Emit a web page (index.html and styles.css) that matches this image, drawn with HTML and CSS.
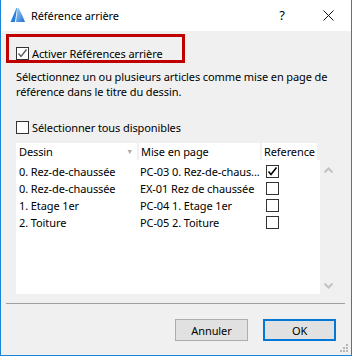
FILE: index.html
```html
<!DOCTYPE html>
<html lang="fr">
  <head>
    <meta charset="UTF-8" />
    <meta name="viewport" content="width=device-width, initial-scale=1.0" />
    <title>Référence arrière</title>
    <link rel="stylesheet" href="styles.css">
  </head>
  <body>
    <div class="window">
      <div class="titlebar">
        <svg class="app-icon" width="16" height="16" viewBox="0 0 16 16">
          <defs>
            <linearGradient id="fin" x1="0" y1="0" x2="1" y2="1">
              <stop offset="0" stop-color="#9fd0f7" />
              <stop offset="1" stop-color="#1c6fd6" />
            </linearGradient>
          </defs>
          <path d="M0.5 15 L6.5 1 L7 1 L5 15 Z" fill="#2a7fe0" />
          <path d="M6 15 L7.5 1 L8.5 1 Q12 7 15 15 Z" fill="url(#fin)" />
        </svg>
        <span class="title">Référence arrière</span>
        <span class="help">?</span>
        <span class="close">
          <svg width="11" height="11" viewBox="0 0 11 11">
            <path d="M0.5 0.5 L10.5 10.5 M10.5 0.5 L0.5 10.5" stroke="#111" stroke-width="1" />
          </svg>
        </span>
      </div>

      <div class="content">
        <div class="highlight">
          <label class="check-row">
            <span class="box">
              <svg width="11" height="11" viewBox="0 0 11 11"><path d="M1.5 5.5 L4 8.5 L9.5 1.5" fill="none" stroke="#555" stroke-width="1.3" /></svg>
            </span>
            Activer Références arrière
          </label>
        </div>

        <p class="hint">Sélectionnez un ou plusieurs articles comme mise en page de<br>référence dans le titre du dessin.</p>

        <label class="check-row select-all">
          <span class="box"></span>
          Sélectionner tous disponibles
        </label>

        <div class="list">
          <div class="list-head">
            <div class="head-cell">Dessin <span class="sort">&#9660;</span></div>
            <div class="head-cell">Mise en page</div>
            <div class="head-cell">Reference</div>
          </div>
          <div class="list-body">
            <div class="rows">
              <div class="row">
                <span>0. Rez-de-chaussée</span>
                <span>PC-03 0. Rez-de-chaus...</span>
                <span class="box">
                  <svg width="11" height="11" viewBox="0 0 11 11"><path d="M1.5 5.5 L4 8.5 L9.5 1.5" fill="none" stroke="#000" stroke-width="1.6" /></svg>
                </span>
              </div>
              <div class="row">
                <span>0. Rez-de-chaussée</span>
                <span>EX-01 Rez de chaussée</span>
                <span class="box"></span>
              </div>
              <div class="row">
                <span>1. Etage 1er</span>
                <span>PC-04 1. Etage 1er</span>
                <span class="box"></span>
              </div>
              <div class="row">
                <span>2. Toiture</span>
                <span>PC-05 2. Toiture</span>
                <span class="box"></span>
              </div>
            </div>
            <div class="scrollbar">
              <svg width="9" height="6" viewBox="0 0 9 6"><path d="M0.5 5.5 L4.5 1.5 L8.5 5.5" fill="none" stroke="#c2c2c2" stroke-width="2" /></svg>
              <svg width="9" height="6" viewBox="0 0 9 6"><path d="M0.5 0.5 L4.5 4.5 L8.5 0.5" fill="none" stroke="#c2c2c2" stroke-width="2" /></svg>
            </div>
          </div>
        </div>

        <div class="separator"></div>

        <div class="actions">
          <button class="btn">Annuler</button>
          <button class="btn ok">OK</button>
        </div>

        <svg class="grip" width="9" height="9" viewBox="0 0 9 9">
          <rect x="7" y="1" width="2" height="2" fill="#b5b5b5" />
          <rect x="4" y="4" width="2" height="2" fill="#b5b5b5" />
          <rect x="7" y="4" width="2" height="2" fill="#b5b5b5" />
          <rect x="1" y="7" width="2" height="2" fill="#b5b5b5" />
          <rect x="4" y="7" width="2" height="2" fill="#b5b5b5" />
          <rect x="7" y="7" width="2" height="2" fill="#b5b5b5" />
        </svg>
      </div>
    </div>
  </body>
</html>
```

FILE: styles.css
```css
body {
  margin: 0;
  font-family: "Segoe UI", "Noto Sans", sans-serif;
  font-size: 11px;
  letter-spacing: -0.1px;
  color: #000;
}
.window {
  width: 352px;
  height: 356px;
  box-sizing: border-box;
  border: 1px solid #1883d7;
  border-top: none;
  background: #f0f0f0;
  position: relative;
}
.titlebar {
  height: 31px;
  background: #fff;
  display: flex;
  align-items: center;
  padding-left: 9px;
}
.app-icon {
  margin-top: -1px;
}
.title {
  margin-left: 5px;
  flex: 1;
}
.help {
  font-size: 13px;
  width: 46px;
  text-align: center;
  margin-top: -2px;
}
.close {
  width: 46px;
  display: flex;
  justify-content: center;
  margin-top: -1px;
}
.content {
  padding-top: 3px;
}
.highlight {
  margin-left: 5px;
  width: 179px;
  height: 29px;
  box-sizing: border-box;
  border: 3px solid #c00000;
  padding: 9px 0 0 7px;
}
.check-row {
  display: flex;
  align-items: center;
  gap: 3px;
  height: 15px;
}
.box {
  width: 13px;
  height: 13px;
  box-sizing: border-box;
  border: 1px solid #333;
  background: #fff;
  display: flex;
  align-items: center;
  justify-content: center;
}
.hint {
  margin: 6px 0 0 15px;
  line-height: 15px;
  white-space: nowrap;
}
.select-all {
  margin: 21px 0 0 15px;
}
.list {
  margin: 8px 0 0 15px;
}
.list-head {
  width: 304px;
  height: 17px;
  display: grid;
  grid-template-columns: 121px 121px 55px 1fr;
  column-gap: 2px;
}
.head-cell {
  background: #fff;
  padding-left: 2px;
  display: flex;
  align-items: center;
}
.head-cell:first-child {
  padding-left: 3px;
}
.sort {
  margin-left: auto;
  margin-right: 4px;
  font-size: 7px;
  color: #a8a8a8;
}
.list-body {
  display: flex;
}
.rows {
  width: 304px;
  height: 134px;
  box-sizing: border-box;
  background: #fff;
  padding-top: 3px;
}
.row {
  height: 17px;
  display: grid;
  grid-template-columns: 121px 126px 1fr;
  align-items: center;
  padding-left: 3px;
  white-space: nowrap;
}
.scrollbar {
  width: 16px;
  display: flex;
  flex-direction: column;
  align-items: center;
  justify-content: space-between;
  padding: 7px 0 5px;
}
.separator {
  margin: 9px 6px 0 5px;
  height: 1px;
  background: #a0a0a0;
}
.actions {
  display: flex;
  justify-content: flex-end;
  gap: 15px;
  margin-top: 15px;
  padding-right: 15px;
}
.btn {
  width: 73px;
  height: 22px;
  font: inherit;
  letter-spacing: inherit;
  background: #e1e1e1;
  border: 1px solid #adadad;
  padding: 0;
  color: #000;
}
.ok {
  border: 2px solid #0078d7;
}
.grip {
  position: absolute;
  right: 3px;
  bottom: 3px;
}
```
